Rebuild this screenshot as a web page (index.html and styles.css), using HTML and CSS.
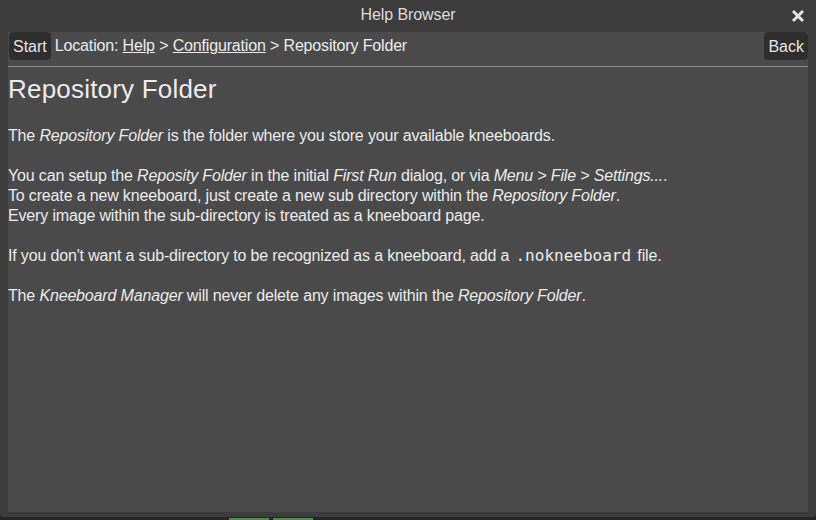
FILE: index.html
```html
<!DOCTYPE html>
<html>
<head>
<meta charset="utf-8">
<link rel="stylesheet" href="styles.css">
</head>
<body>
<div class="window">
  <div class="titlebar">
    <span class="title">Help Browser</span>
    <svg class="close" width="14" height="14" viewBox="0 0 14 14"><path d="M2 2 L12 12 M12 2 L2 12" stroke="#e2e2e2" stroke-width="3" stroke-linecap="butt"/></svg>
  </div>
  <div class="content">
    <div class="nav">
      <span class="btn">Start</span>
      <span class="loc">Location: <a>Help</a> &gt; <a>Configuration</a> &gt; Repository Folder</span>
      <span class="btn">Back</span>
    </div>
    <div class="sep"></div>
    <h1>Repository Folder</h1>
    <p>The <i>Repository Folder</i> is the folder where you store your available kneeboards.</p>
    <p>You can setup the <i>Reposity Folder</i> in the initial <i>First Run</i> dialog, or via <i>Menu &gt; File &gt; Settings...</i>.<br>To create a new kneeboard, just create a new sub directory within the <i>Repository Folder</i>.<br>Every image within the sub-directory is treated as a kneeboard page.</p>
    <p>If you don't want a sub-directory to be recognized as a kneeboard, add a <code>.nokneeboard</code> file.</p>
    <p>The <i>Kneeboard Manager</i> will never delete any images within the <i>Repository Folder</i>.</p>
  </div>
</div>
<div class="taskbar">
  <span class="tab"></span>
  <span class="tab"></span>
</div>
</body>
</html>
```

FILE: styles.css
```css
html, body {
  margin: 0;
  padding: 0;
  background: #262626;
  width: 816px;
  height: 520px;
  overflow: hidden;
  font-family: "Liberation Sans", Arial, sans-serif;
}
.window {
  height: 517px;
  background: #3c3c3c;
  border-radius: 0 0 4px 4px;
  display: flex;
  flex-direction: column;
}
.titlebar {
  height: 32px;
  position: relative;
  display: flex;
  align-items: center;
  justify-content: center;
}
.title {
  color: #dcdcdc;
  font-size: 16px;
  letter-spacing: -0.1px;
  margin-top: -3px;
}
.close {
  position: absolute;
  right: 11px;
  top: 9px;
}
.content {
  margin: 0 8px 5px 8px;
  flex: 1;
  background: #4a4a4a;
  color: #ececec;
  font-size: 16px;
  letter-spacing: -0.16px;
}
.nav {
  display: flex;
  align-items: center;
  height: 28px;
}
.btn {
  background: #2e2e2e;
  border-radius: 4px;
  height: 28px;
  line-height: 29px;
  padding: 0 4px;
  color: #e4e4e4;
  letter-spacing: 0;
}
.nav .btn:first-child {
  margin-left: 1px;
}
.loc {
  flex: 1;
  margin-left: 4px;
  line-height: 30px;
}
.loc a {
  text-decoration: underline;
  color: #ececec;
}
.sep {
  height: 1px;
  background: #8c8c8c;
  margin-top: 6px;
}
h1 {
  font-size: 26px;
  font-weight: normal;
  margin: 7px 0 0 0;
  line-height: 30px;
  letter-spacing: 0.2px;
}
p {
  margin: 20px 0 0 0;
  line-height: 20px;
}
h1 + p {
  margin-top: 22px;
}
code {
  font-family: "DejaVu Sans Mono", monospace;
  font-size: 16px;
  letter-spacing: 0;
  padding: 0 2px;
}
.taskbar {
  display: flex;
  gap: 4px;
  padding-left: 229px;
  align-items: flex-end;
  height: 3px;
}
.tab {
  width: 40px;
  height: 2px;
  background: #4f8a4f;
}
```
